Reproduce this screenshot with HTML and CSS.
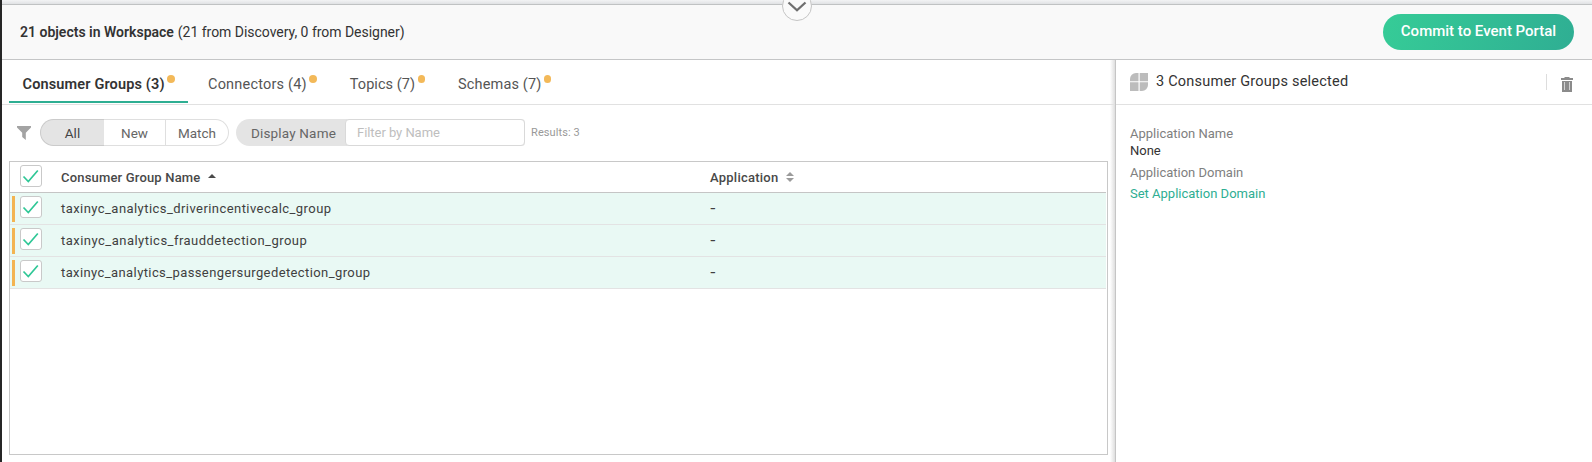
FILE: index.html
```
<!DOCTYPE html>
<html lang="en">
<head>
<meta charset="utf-8">
<title>Workspace</title>
<link rel="stylesheet" href="styles.css">
</head>
<body>
<svg class="defs" width="0" height="0"><symbol id="check" viewBox="0 0 22 22"><path d="M3.500 11.500 8.300 16.500 17.800 5.500" fill="none" stroke="#2fc796" stroke-width="1.700"/></symbol></svg>
<div class="app">
  <div class="canvas-edge"></div>
  <header class="header">
    <div class="summary"><b class="count">21 objects in Workspace</b><span class="detail">(21 from Discovery, 0 from Designer)</span></div>
    <button class="commit"><span>Commit to Event Portal</span></button>
    <div class="collapse"><svg width="30" height="30" viewBox="0 0 30 30"><path d="M7.500 12.500 16 20.300 24.500 12.500" fill="none" stroke="#6f6f6f" stroke-width="2.300"/></svg></div>
  </header>
  <div class="body">
    <main class="main">
      <nav class="tabs">
        <div class="tab active"><span class="t1">Consumer Groups (3)</span><i></i></div>
        <div class="tab"><span class="t2">Connectors (4)</span><i></i></div>
        <div class="tab"><span class="t3">Topics (7)</span><i></i></div>
        <div class="tab"><span class="t4">Schemas (7)</span><i></i></div>
      </nav>
      <div class="toolbar">
        <svg class="funnel" width="14" height="14" viewBox="0 0 14 14"><path d="M0 0H14V1.500L8.800 6.800V14L5.200 11V6.800L0 1.500Z" fill="#a3a3a3"/></svg>
        <div class="segments">
          <span class="seg on"><span>All</span></span><span class="seg"><span>New</span></span><span class="seg"><span>Match</span></span>
        </div>
        <div class="filter"><span class="filter-label">Display Name</span><span class="filter-input">Filter by Name</span></div>
        <span class="results">Results: 3</span>
      </div>
      <section class="table">
        <div class="row head">
          <span class="box"><svg width="22" height="22"><use href="#check"/></svg></span>
          <div class="name"><span class="h1">Consumer Group Name</span><svg class="asc" width="8" height="4" viewBox="0 0 8 4"><path d="M0 4 4 0 8 4Z" fill="#4a4a4a"/></svg></div>
          <div class="appcell"><span class="h2">Application</span><svg class="sort" width="8" height="10" viewBox="0 0 8 10"><path d="M0 4 4 0 8 4ZM0 6H8L4 10Z" fill="#9b9b9b"/></svg></div>
        </div>
        <div class="row"><span class="box"><svg width="22" height="22"><use href="#check"/></svg></span><div class="name"><span class="r1">taxinyc_analytics_driverincentivecalc_group</span></div><div class="appcell"><span class="dash">-</span></div></div>
        <div class="row"><span class="box"><svg width="22" height="22"><use href="#check"/></svg></span><div class="name"><span class="r2">taxinyc_analytics_frauddetection_group</span></div><div class="appcell"><span class="dash">-</span></div></div>
        <div class="row"><span class="box"><svg width="22" height="22"><use href="#check"/></svg></span><div class="name"><span class="r3">taxinyc_analytics_passengersurgedetection_group</span></div><div class="appcell"><span class="dash">-</span></div></div>
      </section>
    </main>
    <aside class="side">
      <div class="side-head">
        <svg width="18" height="18" viewBox="0 0 18 18"><path d="M8.500 0V8.200H0V6A6 6 0 0 1 6 0ZM9.700 0H18V8.200H9.700ZM0 9.300H8.500V18H0ZM9.700 9.300H18V12A6 6 0 0 1 12 18H9.700Z" fill="#bcbcbc"/></svg>
        <span class="side-title">3 Consumer Groups selected</span>
        <span class="divider"></span>
        <svg class="trash" width="12" height="15" viewBox="0 0 12 15"><path d="M3.500 0H8.500V1H12V3H0V1H3.500ZM1 4H11V15H1Z" fill="#8b8b8b"/><path d="M3.500 5V13M8.500 5V13" stroke="#d2d2d2"/></svg>
      </div>
      <div class="fields">
        <span class="label f1">Application Name</span>
        <span class="value f2">None</span>
        <span class="label f3">Application Domain</span>
        <span class="link f4">Set Application Domain</span>
      </div>
    </aside>
  </div>
</div>
</body>
</html>
```
FILE: styles.css
```
* { box-sizing: border-box; }
body { margin: 0; font-family: Roboto, "Liberation Sans", sans-serif; color: #333; background: #fff; }
.defs { display: block; }
.app { height: 462px; overflow: hidden; border-left: 2px solid #262626; display: flex; flex-direction: column; white-space: nowrap; }
.canvas-edge { height: 4px; flex: none; background: linear-gradient(#f3f4f5, #e0e2e4); }
.header { position: relative; height: 56px; flex: none; border-top: 1px solid #c0c2c3; border-bottom: 1px solid #c5c6c7; background: #f9f9f9; display: flex; align-items: center; justify-content: space-between; padding: 0 18px; }
.summary { display: flex; gap: 4px; font-size: 14px; }
.count { font-weight: 600; }
.detail { letter-spacing: -0.03px; }
.commit { height: 36px; width: 191px; border: 0; border-radius: 18px; background: linear-gradient(110deg, #36cc97, #2fae93); color: #fff; font: 500 15px Roboto, sans-serif; padding: 0 0 2px; }
.collapse { position: absolute; left: 780px; top: -14px; width: 30px; height: 30px; border-radius: 50%; border: 1px solid #c5c5c5; background: #fafafa; }
.collapse svg { display: block; margin: -2px; }
.body { flex: 1; display: flex; min-height: 0; }
.main { width: 1113px; padding-bottom: 7px; display: flex; flex-direction: column; background: linear-gradient(to left, #dedede, #fff 5px); }
.tabs { height: 45px; flex: none; border-bottom: 1px solid #e1e1e1; display: flex; padding-left: 7px; }
.tab { height: 43px; display: flex; align-items: center; padding: 5px 13px 0 20px; font-size: 14.500px; color: #555; }
.tab.active { font-weight: 600; color: #333; border-bottom: 2px solid #2eae92; width: 179px; padding: 7px 0 0 13.500px; }
.tab i { width: 7.500px; height: 8px; border-radius: 4px; background: #f3b959; margin: -10px 0 0 2.500px; }
.t1 { letter-spacing: 0.15px; }
.t2 { letter-spacing: 0.2px; }
.t3 { letter-spacing: 0.05px; }
.t4 { letter-spacing: 0.15px; }
.toolbar { height: 56px; flex: none; display: flex; align-items: center; padding: 0 0 2px 15px; color: #666; font-size: 13.500px; }
.funnel { margin: 1px 9px 0 0; }
.segments { display: flex; width: 189px; height: 27px; }
.seg { display: flex; align-items: center; justify-content: center; border: 1px solid #dfdfdf; border-left: 0; width: 62px; padding-top: 2px; }
.seg.on { width: 64px; border: 1px solid #cbcbcb; border-right: 0; border-radius: 14px 0 0 14px; background: #e4e4e4; color: #444; }
.seg:last-child { width: 63px; border-radius: 0 14px 14px 0; }
.filter { display: flex; height: 27px; width: 289px; margin-left: 7px; background: #e4e4e4; border-radius: 14px 4px 4px 14px; }
.filter-label { width: 109px; padding-left: 15px; line-height: 29px; letter-spacing: 0.17px; }
.filter-input { flex: 1; border: 1px solid #d9d9d9; border-radius: 4px; background: #fff; padding-left: 11px; line-height: 26px; font-size: 13px; color: #bebebe; letter-spacing: -0.05px; }
.results { margin-left: 6px; font-size: 11px; color: #999; letter-spacing: 0.1px; }
.table { margin: 0 7px 0 7px; flex: 1; border: 1px solid #c8c8c8; padding-right: 1px; background: #fff; }
.row { height: 32px; display: flex; border-bottom: 1px solid #e3e3e3; background: #e9f9f4; font-size: 13px; color: #404040; padding-left: 10px; }
.row:not(.head)::before { content: ""; width: 3px; height: 26px; margin: 3px 5px 0 -8px; background: #f3b451; }
.head { height: 31px; background: #fff; border-color: #c5c5c5; font-weight: 500; color: #484848; }
.box { width: 22px; height: 22px; flex: none; margin-top: 3px; border: 1px solid #c9c9c9; border-radius: 3px; background: #fff; }
.box svg { display: block; margin: -1px; }
.name { width: 668px; padding-left: 19px; display: flex; align-items: center; gap: 7px; }
.asc { margin-top: -3px; }
.h1 { letter-spacing: 0.18px; }
.h2 { letter-spacing: 0.24px; }
.r1 { letter-spacing: 0.44px; }
.r2 { letter-spacing: 0.48px; }
.r3 { letter-spacing: 0.4px; }
.dash { font-weight: 500; transform: scaleX(1.3); transform-origin: left; }
.appcell { display: flex; align-items: center; gap: 8px; }
.side { flex: 1; border-left: 1px solid #c5c5c5; background: #fff; }
.side-head { height: 45px; border-bottom: 1px solid #e1e1e1; display: flex; align-items: center; padding: 0 19px 0 14px; }
.side-title { margin: -2px 0 0 8px; font-size: 14.500px; letter-spacing: 0.22px; }
.divider { width: 1px; height: 16px; margin: 0 14px 0 auto; background: #ddd; }
.trash { margin-top: 5px; }
.fields { display: flex; flex-direction: column; align-items: flex-start; padding: 20px 14px; font-size: 13px; line-height: 17px; }
.label { color: #808080; }
.f3 { margin-top: 5px; }
.f4 { margin-top: 4px; color: #2eae92; }
```
